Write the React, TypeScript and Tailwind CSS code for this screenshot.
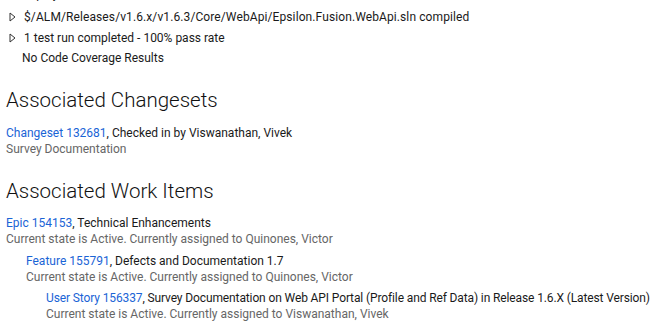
import React from "react";

const Tri = () => (
  <svg width="7" height="10" viewBox="0 0 7 10" className="shrink-0">
    <path d="M1 1 L6 5 L1 9 Z" fill="none" stroke="#333" strokeWidth="1" strokeLinejoin="miter" />
  </svg>
);

const Item = ({
  link,
  title,
  sub,
  indent,
  tight,
}: {
  link: string;
  title: string;
  sub: string;
  indent: string;
  tight?: boolean;
}) => (
  <div className={indent}>
    <div
      className={
        tight
          ? "leading-[16px] text-[12px] text-[#1a1a1a] whitespace-nowrap tracking-[-0.12px]"
          : "leading-[16px] text-[12px] text-[#1a1a1a] whitespace-nowrap"
      }
    >
      <span className="text-[#1a64d6]">{link}</span>, {title}
    </div>
    <div className="leading-[16px] text-[12px] text-[#666666] whitespace-nowrap">{sub}</div>
  </div>
);

export default function App() {
  return (
    <div
      className="w-[655px] h-[329px] overflow-hidden bg-white text-[#1a1a1a]"
      style={{ fontFamily: 'Roboto, "Open Sans", sans-serif' }}
    >
      <div className="text-[12px]">
        <div className="-mt-[16.5px] mb-[3px] leading-[20.5px] pl-[22px] whitespace-nowrap">Deployed to Test Environment</div>
        <div className="flex items-center gap-[8px] pl-[9px] leading-[20.5px] whitespace-nowrap">
          <Tri />
          <span className="tracking-[0.1px]">$/ALM/Releases/v1.6.x/v1.6.3/Core/WebApi/Epsilon.Fusion.WebApi.sln compiled</span>
        </div>
        <div className="flex items-center gap-[8px] pl-[9px] leading-[20.5px] whitespace-nowrap">
          <Tri />
          <span>1 test run completed - 100% pass rate</span>
        </div>
        <div className="pl-[22px] leading-[20.5px]">No Code Coverage Results</div>
      </div>

      <div className="pl-[6px]">
        <div className="mt-[17.5px] text-[20.5px] font-light leading-[28px] text-[#111]">Associated Changesets</div>
        <div className="mt-[10.5px]">
          <Item
            indent=""
            link="Changeset 132681"
            title="Checked in by Viswanathan, Vivek"
            sub="Survey Documentation"
          />
        </div>

        <div className="mt-[20.5px] text-[20.5px] font-light leading-[28px] text-[#111]">Associated Work Items</div>
        <div className="mt-[10px] flex flex-col gap-[5.5px]">
          <Item
            indent=""
            link="Epic 154153"
            title="Technical Enhancements"
            sub="Current state is Active. Currently assigned to Quinones, Victor"
          />
          <Item
            indent="pl-[20px]"
            link="Feature 155791"
            title="Defects and Documentation 1.7"
            sub="Current state is Active. Currently assigned to Quinones, Victor"
          />
          <Item
            indent="pl-[40px]"
            link="User Story 156337"
            title="Survey Documentation on Web API Portal (Profile and Ref Data) in Release 1.6.X (Latest Version)"
            sub="Current state is Active. Currently assigned to Viswanathan, Vivek"
            tight
          />
        </div>
      </div>
    </div>
  );
}
